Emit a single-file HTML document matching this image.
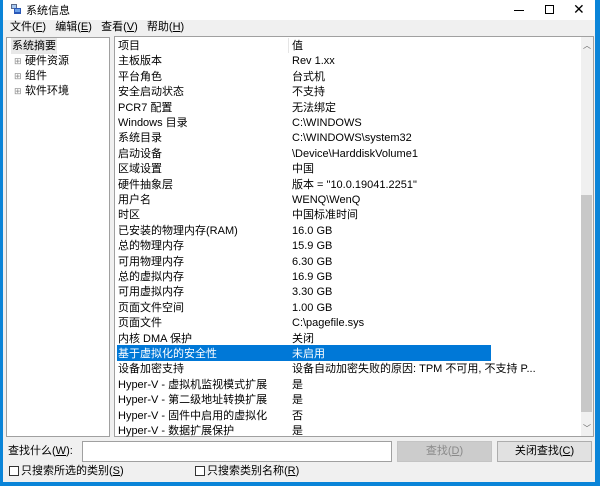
<!DOCTYPE html>
<html><head><meta charset="utf-8">
<style>
*{margin:0;padding:0;box-sizing:border-box}
body{width:600px;height:486px;background:#0a84d8;position:relative;overflow:hidden;font-family:"Liberation Sans","Noto Sans CJK SC",sans-serif;font-size:11px;color:#000}
.a{position:absolute;white-space:nowrap;line-height:15px}
u{text-decoration:underline}
</style></head><body>
<div class="a" style="left:3px;top:0;width:592px;height:482px;background:#f0f0f0"></div>
<div class="a" style="left:3px;top:0;width:592px;height:20px;background:#fff"></div>
<svg class="a" style="left:11px;top:4px" width="10" height="11" viewBox="0 0 10 11"><rect x="0" y="0" width="6" height="5" fill="#5a6b8c"/><rect x="1" y="1" width="4" height="3" fill="#a8c8f0"/><rect x="3" y="4" width="7" height="6" fill="#2a58b8"/><rect x="4" y="5" width="5" height="3" fill="#6aa0e8"/></svg>
<div class="a" style="left:26px;top:4px">系统信息</div>
<div class="a" style="left:514px;top:10px;width:10px;height:1px;background:#000"></div>
<div class="a" style="left:545px;top:5px;width:9px;height:9px;border:1px solid #000"></div>
<div class="a" style="left:573px;top:2px;font-size:14px">✕</div>
<div class="a" style="left:10px;top:20px">文件(<u>F</u>)&nbsp;&nbsp; 编辑(<u>E</u>)&nbsp;&nbsp; 查看(<u>V</u>)&nbsp;&nbsp; 帮助(<u>H</u>)</div>
<div class="a" style="left:6px;top:37px;width:104px;height:400px;background:#fff;border:1px solid #a0a0a0"></div>
<div class="a" style="left:11px;top:38px;background:#e8e8e8;padding:0 1px;height:16px;line-height:16px">系统摘要</div>
<div class="a" style="left:14px;top:54px;color:#888;font-size:9px">⊞</div><div class="a" style="left:25px;top:54px">硬件资源</div>
<div class="a" style="left:14px;top:69px;color:#888;font-size:9px">⊞</div><div class="a" style="left:25px;top:69px">组件</div>
<div class="a" style="left:14px;top:84px;color:#888;font-size:9px">⊞</div><div class="a" style="left:25px;top:84px">软件环境</div>
<div class="a" style="left:114px;top:36px;width:480px;height:401px;background:#fff;border:1px solid #a0a0a0"></div>
<div class="a" style="left:288px;top:38px;width:1px;height:15px;background:#e5e5e5"></div>
<div class="a" style="left:117px;top:345px;width:374px;height:16px;background:#0078d7"></div>
<div class="a" style="left:581px;top:37px;width:12px;height:399px;background:#f0f0f0"></div>
<div class="a" style="left:581px;top:195px;width:11px;height:217px;background:#c8c8c8"></div>
<div class="a" style="left:583px;top:38px;font-size:8px;color:#606060">︿</div>
<div class="a" style="left:583px;top:421px;font-size:8px;color:#606060">﹀</div>
<div id="rows"></div>
<script>
var r=[["项目","值"],["主板版本","Rev 1.xx"],["平台角色","台式机"],["安全启动状态","不支持"],["PCR7 配置","无法绑定"],["Windows 目录","C:\\WINDOWS"],["系统目录","C:\\WINDOWS\\system32"],["启动设备","\\Device\\HarddiskVolume1"],["区域设置","中国"],["硬件抽象层","版本 = \"10.0.19041.2251\""],["用户名","WENQ\\WenQ"],["时区","中国标准时间"],["已安装的物理内存(RAM)","16.0 GB"],["总的物理内存","15.9 GB"],["可用物理内存","6.30 GB"],["总的虚拟内存","16.9 GB"],["可用虚拟内存","3.30 GB"],["页面文件空间","1.00 GB"],["页面文件","C:\\pagefile.sys"],["内核 DMA 保护","关闭"],["基于虚拟化的安全性","未启用"],["设备加密支持","设备自动加密失败的原因: TPM 不可用, 不支持 P..."],["Hyper-V - 虚拟机监视模式扩展","是"],["Hyper-V - 第二级地址转换扩展","是"],["Hyper-V - 固件中启用的虚拟化","否"],["Hyper-V - 数据扩展保护","是"]];
var h="";for(var i=0;i<r.length;i++){var y=Math.round(39+i*15.4);var c=i==20?"color:#fff;":"";h+='<div class="a" style="'+c+'left:118px;top:'+y+'px;height:15px">'+r[i][0]+'</div><div class="a" style="'+c+'left:292px;top:'+y+'px;height:15px">'+r[i][1]+'</div>';}
document.getElementById("rows").innerHTML=h;
</script>
<div class="a" style="left:8px;top:444px">查找什么(<u>W</u>):</div>
<div class="a" style="left:82px;top:441px;width:310px;height:21px;background:#fff;border:1px solid #a0a0a0"></div>
<div class="a" style="left:397px;top:441px;width:95px;height:21px;background:#cccccc;border:1px solid #c4c4c4;color:#8a8a8a;text-align:center;line-height:19px">查找(<u>D</u>)</div>
<div class="a" style="left:497px;top:441px;width:95px;height:21px;background:#e1e1e1;border:1px solid #adadad;text-align:center;line-height:19px">关闭查找(<u>C</u>)</div>
<div class="a" style="left:9px;top:466px;width:10px;height:10px;border:1px solid #333;background:#fff"></div>
<div class="a" style="left:21px;top:464px">只搜索所选的类别(<u>S</u>)</div>
<div class="a" style="left:195px;top:466px;width:10px;height:10px;border:1px solid #333;background:#fff"></div>
<div class="a" style="left:207px;top:464px">只搜索类别名称(<u>R</u>)</div>
</body></html>
